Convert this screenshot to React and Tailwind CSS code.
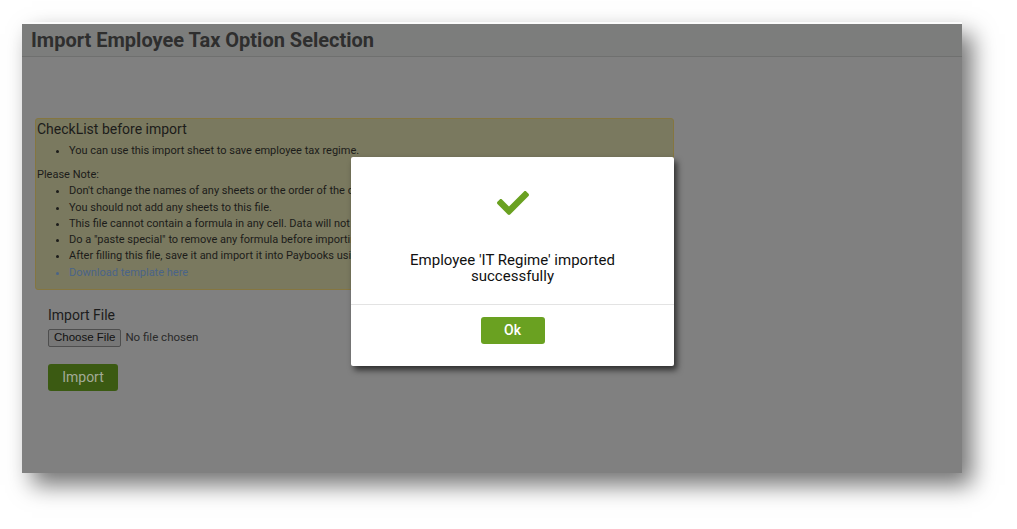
import React from "react";
import { FaCheck } from "react-icons/fa";

const notes = [
  "Don't change the names of any sheets or the order of the columns in any sheet.",
  "You should not add any sheets to this file.",
  "This file cannot contain a formula in any cell. Data will not be imported if a formula is present.",
  "Do a \"paste special\" to remove any formula before importing.",
  "After filling this file, save it and import it into Paybooks using the import option below.",
];

export default function App() {
  return (
    <div className="w-[1017px] h-[529px] bg-white overflow-hidden font-['Roboto',sans-serif]">
      {/* dimmed page frame */}
      <div className="relative ml-[22px] mt-[22px] w-[940px] h-[451px] bg-[#808080] border-t-2 border-[#fbfbfb] shadow-[10px_12px_22px_rgba(0,0,0,0.55)]">
        <div className="h-[33px] bg-[#7c7d7c] border-b border-[#6f706f] pl-[9px] flex items-center">
          <h1 className="text-[20px] font-bold text-[#2e2e2e] leading-none -mt-[1px]">
            Import Employee Tax Option Selection
          </h1>
        </div>

        <div className="ml-[13px] mt-[61px] w-[639px] bg-[#7a795f] border border-[#857640] rounded-[3px] pb-[8px] text-[#1c1c1a]">
          <div className="text-[14px] leading-[20px] pl-[1px]">CheckList before import</div>
          <ul className="list-disc pl-[33px] mt-[4px] text-[11px] leading-[16.3px]">
            <li>You can use this import sheet to save employee tax regime.</li>
          </ul>
          <div className="text-[11px] leading-[16px] mt-[8px] pl-[1px]">Please Note:</div>
          <ul className="list-disc pl-[33px] text-[11px] leading-[16.3px]">
            {notes.map((n) => (
              <li key={n} className="whitespace-nowrap">{n}</li>
            ))}
            <li className="text-[#4a6488]">Download template here</li>
          </ul>
        </div>

        <div className="ml-[26px] mt-[15px]">
          <div className="text-[14px] leading-[20px] text-[#1c1c1c]">Import File</div>
          <div className="flex items-center gap-[4px] mt-[4px]">
            <button className="h-[18px] px-[5px] bg-[#777777] border border-[#4e4e4e] rounded-[2px] text-[11.5px] leading-none text-[#111] font-['Liberation_Sans',sans-serif]">
              Choose File
            </button>
            <span className="text-[11.5px] text-[#2a2a2a]">No file chosen</span>
          </div>
          <button className="mt-[17px] w-[70px] h-[27px] bg-[#3b5a12] rounded-[3px] text-[14px] text-[#a3aa98]">
            Import
          </button>
        </div>

        {/* modal */}
        <div className="absolute left-[329px] top-[133px] w-[323px] h-[209px] bg-white rounded-[2px] shadow-[3px_4px_6px_rgba(0,0,0,0.65)] flex flex-col">
          <div className="h-[148px] border-b border-[#e3e3e3] flex flex-col items-center pt-[30px]">
            <FaCheck className="text-[#6aa121] w-[38px] h-[32px]" />
            <p className="mt-[33px] w-[240px] text-center text-[15px] leading-[16px] text-[#111]">
              Employee 'IT Regime' imported successfully
            </p>
          </div>
          <div className="flex justify-center pt-[12px]">
            <button className="w-[64px] h-[27px] bg-[#6aa121] rounded-[3px] text-white text-[14px] font-medium">
              Ok
            </button>
          </div>
        </div>
      </div>
    </div>
  );
}
